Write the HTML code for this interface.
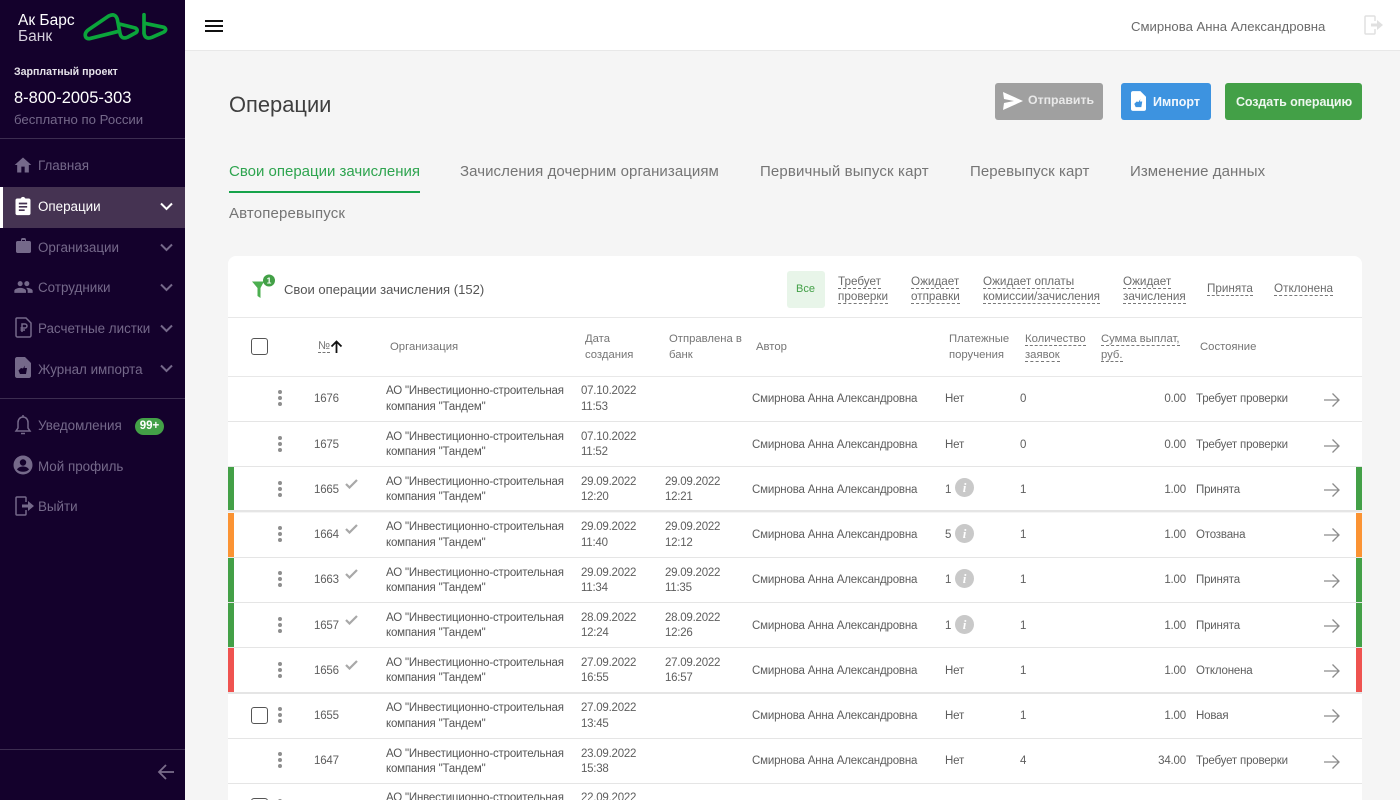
<!DOCTYPE html>
<html lang="ru"><head><meta charset="utf-8"><title>Операции</title>
<style>
*{box-sizing:border-box}
html,body{margin:0;padding:0;width:1400px;height:800px;overflow:hidden;background:#f5f5f5;font-family:"Liberation Sans",sans-serif;color:#555}
#w{position:absolute;left:0;top:0;width:1400px;height:800px;overflow:hidden;background:#f5f5f5}
.a,.t{position:absolute}
.t{white-space:nowrap;line-height:16px}
.nav{color:#75698a;font-size:13.400px;left:38px;line-height:20px;margin-top:1px}
.hd{font-size:11.300px;color:#757575}
.fl{font-size:11.700px;color:#6b6b6b;line-height:15px;top:274px}
.d{border-bottom:1px dashed #777}
.tab{font-size:15px;color:#757575;line-height:20px;letter-spacing:.07px}
.r{position:absolute;left:228px;width:1134px;background:#fff;border-bottom:1px solid #e5e5e5}
.r .t{font-size:11.500px;color:#5e5e5e;letter-spacing:-.18px;margin-top:1px}
.r .o{left:158px;line-height:15px;top:7px;color:#555;letter-spacing:-.19px}
.r .m{line-height:15px;top:7px;letter-spacing:-.24px}
.r .g{line-height:16px;top:6px;margin-top:0}
.bar{position:absolute;top:0;bottom:0;width:6px}
.cb{position:absolute;width:17px;height:17px;border:1.500px solid #555;border-radius:3px;background:#fff}
.dots{position:absolute;left:50px;width:4px;height:16px}
.dots i{display:block;width:4px;height:4px;border-radius:50%;background:#8e8e8e;margin-bottom:2px}
.inf{position:absolute;left:727px;width:19px;height:19px;border-radius:50%;background:#c9c9c9;color:#fff;font:italic bold 13px/19px "Liberation Serif",serif;text-align:center}
svg{position:absolute;display:block}
</style></head><body><div id="w">

<!-- sidebar -->
<div class="a" style="left:0;top:0;width:185px;height:800px;background:#14012c"></div>
<div class="t" style="left:18px;top:12px;color:#fff;font-size:15.500px;line-height:18px">Ак Барс</div>
<div class="t" style="left:18px;top:28px;color:#d5d0dc;font-size:15.500px;line-height:18px">Банк</div>
<svg style="left:78px;top:8px" width="95" height="40" viewBox="0 0 285 120" fill="none" stroke="#0ba53b" stroke-width="11" stroke-linecap="round" stroke-linejoin="round"><path d="M122 70 L34 92 Q20 92 22 78 Q24 70 32 65 L92 24 Q112 14 118 34 L126 76 Q130 95 148 88 L174 74 Q182 66 172 60 L124 48"/><path d="M198 20 L198 76 Q202 96 222 88 L258 72 Q268 64 258 58 L200 46"/></svg>
<div class="t" style="left:14px;top:64px;font-size:10.600px;font-weight:bold;color:#e6e3ea">Зарплатный проект</div>
<div class="t" style="left:14px;top:88px;font-size:16.500px;color:#fff;line-height:20px">8-800-2005-303</div>
<div class="t" style="left:14px;top:112px;font-size:13.200px;color:#75698a">бесплатно по России</div>
<div class="a" style="left:0;top:138px;width:185px;height:1px;background:#3c2d50"></div>
<div class="a" style="left:0;top:187px;width:185px;height:41px;background:#453352"></div>
<div class="a" style="left:0;top:187px;width:3px;height:41px;background:#fff"></div>

<svg style="left:13px;top:155px" width="20" height="20" viewBox="0 0 24 24" fill="#75698a"><path d="M10 21v-7h4v7h5v-9h3L12 3 2 12h3v9z"/></svg>
<div class="t nav" style="top:155px">Главная</div>
<svg style="left:13px;top:195px" width="20" height="22" viewBox="0 0 24 24" fill="#fff"><path d="M19 3h-4.200C14.400 1.800 13.300 1 12 1s-2.400.8-2.800 2H5C3.900 3 3 3.900 3 5v16c0 1.100.9 2 2 2h14c1.100 0 2-.9 2-2V5c0-1.100-.9-2-2-2zM7 8h10v2H7zm0 4h10v2H7zm0 4h7v2H7z"/></svg>
<div class="t nav" style="top:196px;color:#fff">Операции</div>
<svg style="left:16px;top:237px" width="15" height="18" viewBox="0 0 15 18" fill="#75698a"><path d="M5 4V2.500C5 1.700 5.700 1 6.500 1h2C9.300 1 10 1.700 10 2.500V4h3.500C14.300 4 15 4.700 15 5.500v9c0 .8-.7 1.500-1.500 1.500h-12C.7 16 0 15.300 0 14.500v-9C0 4.700.7 4 1.500 4zm1-1v1h3V3z"/></svg>
<div class="t nav" style="top:237px">Организации</div>
<svg style="left:13px;top:277px" width="21" height="20" viewBox="0 0 24 24" fill="#75698a"><path d="M16 11c1.700 0 3-1.300 3-3s-1.300-3-3-3-3 1.300-3 3 1.300 3 3 3zm-8 0c1.700 0 3-1.300 3-3S9.700 5 8 5 5 6.300 5 8s1.300 3 3 3zm0 2c-2.300 0-7 1.200-7 3.500V19h14v-2.500C15 14.200 10.300 13 8 13zm8 0h-1c1.200.9 2 2 2 3.500V19h6v-2.500c0-2.300-4.700-3.500-7-3.500z"/></svg>
<div class="t nav" style="top:277px">Сотрудники</div>
<svg style="left:15px;top:317px" width="17" height="21" viewBox="0 0 17 21" fill="none" stroke="#75698a" stroke-width="1.500"><path d="M2 1h9l5 5v12.500c0 .8-.7 1.500-1.500 1.500h-12C1.700 20 1 19.300 1 18.500V2C1 1.400 1.400 1 2 1zM7 15V7h3a2 2 0 0 1 0 4H5.500M5.500 13H10"/></svg>
<div class="t nav" style="top:318px">Расчетные листки</div>
<svg style="left:15px;top:357px" width="16" height="21" viewBox="0 0 16 21"><path fill="#75698a" d="M2 0h8l6 6v13c0 1.100-.9 2-2 2H2c-1.100 0-2-.9-2-2V2C0 .9.900 0 2 0z"/><path fill="#14012c" d="M10 8.500L9.500 11H12l-1 6H5l-1.500-3.500L6 11l2 .5z"/></svg>
<div class="t nav" style="top:359px">Журнал импорта</div>
<div class="a" style="left:0;top:398px;width:185px;height:1px;background:#3c2d50"></div>
<svg style="left:14px;top:414px" width="18" height="22" viewBox="0 0 18 22" fill="none" stroke="#75698a" stroke-width="1.500"><path d="M2 17h14l-2-3V8.500C14 5.500 12 3 9 3S4 5.500 4 8.500V14z"/><path d="M9 1v2M7 19.500h4"/></svg>
<div class="t nav" style="top:415px">Уведомления</div>
<div class="a" style="left:135px;top:418px;width:29px;height:17px;border-radius:9px;background:#43a047;color:#fff;font-size:11.500px;font-weight:bold;line-height:17px;text-align:center">99+</div>
<svg style="left:13px;top:455px" width="20" height="20" viewBox="0 0 20 20"><circle cx="10" cy="10" r="9.500" fill="#75698a"/><circle cx="10" cy="7.500" r="3.200" fill="#14012c"/><path fill="#14012c" d="M4 14.500c1-2 3.500-3 6-3s5 1 6 3c-1.500 1.500-3.500 2.300-6 2.300s-4.500-.8-6-2.300z"/></svg>
<div class="t nav" style="top:456px">Мой профиль</div>
<svg style="left:15px;top:496px" width="20" height="20" viewBox="0 0 20 20" fill="none" stroke="#75698a" stroke-width="1.500"><path d="M11 6V2c0-.6-.4-1-1-1H2c-.6 0-1 .4-1 1v16c0 .6.400 1 1 1h8c.6 0 1-.4 1-1v-4"/><path fill="#75698a" stroke="none" d="M7 8.500h6V5l6 5-6 5v-3.500H7z"/></svg>
<div class="t nav" style="top:496px">Выйти</div>
<svg style="left:160px;top:202px" width="13" height="9" viewBox="0 0 13 9" fill="none" stroke="#fff" stroke-width="2"><path d="M1 1.500l5.500 5.500L12 1.500"/></svg>
<svg style="left:160px;top:243px" width="13" height="9" viewBox="0 0 13 9" fill="none" stroke="#75698a" stroke-width="2"><path d="M1 1.500l5.500 5.500L12 1.500"/></svg>
<svg style="left:160px;top:283px" width="13" height="9" viewBox="0 0 13 9" fill="none" stroke="#75698a" stroke-width="2"><path d="M1 1.500l5.500 5.500L12 1.500"/></svg>
<svg style="left:160px;top:324px" width="13" height="9" viewBox="0 0 13 9" fill="none" stroke="#75698a" stroke-width="2"><path d="M1 1.500l5.500 5.500L12 1.500"/></svg>
<svg style="left:160px;top:364px" width="13" height="9" viewBox="0 0 13 9" fill="none" stroke="#75698a" stroke-width="2"><path d="M1 1.500l5.500 5.500L12 1.500"/></svg>
<div class="a" style="left:0;top:749px;width:185px;height:1px;background:#3c2d50"></div>
<svg style="left:157px;top:764px" width="18" height="16" viewBox="0 0 18 16" fill="none" stroke="#7a6d8b" stroke-width="1.800"><path d="M17 8H2M9 1L2 8l7 7"/></svg>

<!-- top bar -->
<div class="a" style="left:185px;top:0;width:1215px;height:51px;background:#fff;border-bottom:1px solid #e8e8e8"></div>
<div class="a" style="left:205px;top:20px;width:18px;height:2px;background:#111"></div>
<div class="a" style="left:205px;top:25px;width:18px;height:2px;background:#111"></div>
<div class="a" style="left:205px;top:30px;width:18px;height:2px;background:#111"></div>
<div class="t" style="left:1131px;top:19px;font-size:13.150px;color:#6b6b6b">Смирнова Анна Александровна</div>
<svg style="left:1364px;top:15px" width="20" height="20" viewBox="0 0 20 20" fill="none" stroke="#e0e0e0" stroke-width="1.500"><path d="M11 6V2c0-.6-.4-1-1-1H2c-.6 0-1 .4-1 1v16c0 .6.400 1 1 1h8c.6 0 1-.4 1-1v-4"/><path fill="#e0e0e0" stroke="none" d="M7 8.500h6V5l6 5-6 5v-3.500H7z"/></svg>

<!-- title + buttons -->
<div class="t" style="left:229px;top:92px;font-size:21.900px;color:#3f3f3f;line-height:26px">Операции</div>
<div class="a" style="left:995px;top:83px;width:108px;height:37px;background:#a0a0a0;border-radius:3px"></div>
<svg style="left:1003px;top:92px" width="20" height="18" viewBox="0 0 20 18" fill="#fff"><path d="M0 0l20 9L0 18l1-7 10-2-10-2z"/></svg>
<div class="t" style="left:1028px;top:92px;font-size:12.300px;font-weight:bold;color:#e9e9e9">Отправить</div>
<div class="a" style="left:1121px;top:83px;width:90px;height:37px;background:#3d93e0;border-radius:3px"></div>
<svg style="left:1131px;top:91px" width="15" height="20" viewBox="0 0 16 21"><path fill="#fff" d="M2 0h8l6 6v13c0 1.100-.9 2-2 2H2c-1.100 0-2-.9-2-2V2C0 .9.900 0 2 0z"/><path fill="#3d93e0" d="M10 8.500L9.500 11H12l-1 6H5l-1.500-3.500L6 11l2 .5z"/></svg>
<div class="t" style="left:1153px;top:94px;font-size:12.500px;font-weight:bold;color:#f1f7fd">Импорт</div>
<div class="a" style="left:1225px;top:83px;width:137px;height:37px;background:#43a047;border-radius:3px"></div>
<div class="t" style="left:1236px;top:94px;font-size:12.500px;font-weight:bold;color:#eef7ef;letter-spacing:-.1px">Создать операцию</div>

<!-- tabs -->
<div class="t tab" style="left:229px;top:162px;color:#2ea44f;letter-spacing:0">Свои операции зачисления</div>
<div class="a" style="left:229px;top:191px;width:191px;height:2px;background:#16a34a"></div>
<div class="t tab" style="left:460px;top:162px">Зачисления дочерним организациям</div>
<div class="t tab" style="left:760px;top:162px;letter-spacing:.14px">Первичный выпуск карт</div>
<div class="t tab" style="left:970px;top:162px">Перевыпуск карт</div>
<div class="t tab" style="left:1130px;top:162px">Изменение данных</div>
<div class="t tab" style="left:229px;top:204px;letter-spacing:.14px">Автоперевыпуск</div>

<!-- card head -->
<div class="a" style="left:228px;top:256px;width:1134px;height:62px;background:#fff;border-radius:8px 8px 0 0;border-bottom:1px solid #e8e8e8"></div>
<svg style="left:252px;top:274px" width="24" height="26" viewBox="0 0 24 26"><path fill="#4caf50" d="M0 7.500h12L8.500 14v10l-3-2v-8z"/><circle cx="17" cy="6.500" r="6" fill="#43a047"/><text x="17" y="9.500" font-size="8.500" font-weight="bold" fill="#fff" text-anchor="middle" font-family="Liberation Sans">1</text></svg>
<div class="t" style="left:284px;top:282px;font-size:13.050px;color:#555">Свои операции зачисления (152)</div>
<div class="a" style="left:787px;top:271px;width:38px;height:37px;background:#e8f5e9;border-radius:3px"></div>
<div class="t" style="left:796px;top:281px;font-size:11px;color:#43a047">Все</div>
<div class="t fl" style="left:838px"><span class="d">Требует</span><br><span class="d">проверки</span></div>
<div class="t fl" style="left:911px"><span class="d">Ожидает</span><br><span class="d">отправки</span></div>
<div class="t fl" style="left:983px"><span class="d">Ожидает оплаты</span><br><span class="d">комиссии/зачисления</span></div>
<div class="t fl" style="left:1123px"><span class="d">Ожидает</span><br><span class="d">зачисления</span></div>
<div class="t fl" style="left:1207px;top:281px"><span class="d">Принята</span></div>
<div class="t fl" style="left:1274px;top:281px"><span class="d">Отклонена</span></div>

<!-- table head -->
<div class="a" style="left:228px;top:318px;width:1134px;height:59px;background:#fff;border-bottom:1px solid #e8e8e8"></div>
<div class="cb" style="left:251px;top:338px"></div>
<div class="t hd" style="left:318px;top:338px"><span class="d">№</span></div>
<svg style="left:330px;top:340px" width="13" height="13" viewBox="0 0 13 13" fill="none" stroke="#111" stroke-width="1.800"><path d="M6.500 13V2M1.500 6.500l5-5 5 5"/></svg>
<div class="t hd" style="left:390px;top:339px">Организация</div>
<div class="t hd" style="left:585px;top:331px">Дата<br>создания</div>
<div class="t hd" style="left:669px;top:331px">Отправлена в<br>банк</div>
<div class="t hd" style="left:756px;top:339px">Автор</div>
<div class="t hd" style="left:949px;top:331px">Платежные<br>поручения</div>
<div class="t hd" style="left:1025px;top:331px"><span class="d">Количество</span><br><span class="d">заявок</span></div>
<div class="t hd" style="left:1101px;top:331px"><span class="d">Сумма выплат,</span><br><span class="d">руб.</span></div>
<div class="t hd" style="left:1200px;top:339px">Состояние</div>

<!-- rows -->
<div class="r" style="top:377px;height:45px"><div class="dots" style="top:13px"><i></i><i></i><i></i></div><div class="t" style="left:86px;top:13px">1676</div><div class="t o g">АО "Инвестиционно-строительная<br>компания "Тандем"</div><div class="t m g" style="left:353px">07.10.2022<br>11:53</div><div class="t" style="left:524px;top:13px">Смирнова Анна Александровна</div><div class="t" style="left:717px;top:13px">Нет</div><div class="t" style="left:792px;top:13px">0</div><div class="t" style="right:176px;top:13px">0.00</div><div class="t" style="left:968px;top:13px">Требует проверки</div><svg style="left:1096px;top:15px" width="16" height="16" viewBox="0 0 16 16" fill="none" stroke="#8c8c8c" stroke-width="1.300"><path d="M0 8h15M8.500 1.500L15 8l-6.500 6.500"/></svg></div>

<div class="r" style="top:422px;height:45px"><div class="dots" style="top:14px"><i></i><i></i><i></i></div><div class="t" style="left:86px;top:14px">1675</div><div class="t o">АО "Инвестиционно-строительная<br>компания "Тандем"</div><div class="t m" style="left:353px">07.10.2022<br>11:52</div><div class="t" style="left:524px;top:14px">Смирнова Анна Александровна</div><div class="t" style="left:717px;top:14px">Нет</div><div class="t" style="left:792px;top:14px">0</div><div class="t" style="right:176px;top:14px">0.00</div><div class="t" style="left:968px;top:14px">Требует проверки</div><svg style="left:1096px;top:15.500px" width="16" height="16" viewBox="0 0 16 16" fill="none" stroke="#8c8c8c" stroke-width="1.300"><path d="M0 8h15M8.500 1.500L15 8l-6.500 6.500"/></svg></div>

<div class="r" style="top:467px;height:45px;border-bottom-width:2px"><div class="bar" style="left:0;background:#43a047"></div><div class="bar" style="right:0;background:#43a047"></div><div class="dots" style="top:14px"><i></i><i></i><i></i></div><div class="t" style="left:86px;top:14px">1665</div><svg style="left:117px;top:12px" width="13" height="10" viewBox="0 0 13 10" fill="none" stroke="#a8a8a8" stroke-width="2.200"><path d="M1 5l3.500 3.500L12 1"/></svg><div class="t o">АО "Инвестиционно-строительная<br>компания "Тандем"</div><div class="t m" style="left:353px">29.09.2022<br>12:20</div><div class="t m" style="left:437px">29.09.2022<br>12:21</div><div class="t" style="left:524px;top:14px">Смирнова Анна Александровна</div><div class="t" style="left:717px;top:14px">1</div><div class="inf" style="top:11px">i</div><div class="t" style="left:792px;top:14px">1</div><div class="t" style="right:176px;top:14px">1.00</div><div class="t" style="left:968px;top:14px">Принята</div><svg style="left:1096px;top:15px" width="16" height="16" viewBox="0 0 16 16" fill="none" stroke="#8c8c8c" stroke-width="1.300"><path d="M0 8h15M8.500 1.500L15 8l-6.500 6.500"/></svg></div>

<div class="r" style="top:513px;height:45px"><div class="bar" style="left:0;background:#fb9333"></div><div class="bar" style="right:0;background:#fb9333"></div><div class="dots" style="top:13px"><i></i><i></i><i></i></div><div class="t" style="left:86px;top:13px">1664</div><svg style="left:117px;top:11px" width="13" height="10" viewBox="0 0 13 10" fill="none" stroke="#a8a8a8" stroke-width="2.200"><path d="M1 5l3.500 3.500L12 1"/></svg><div class="t o g">АО "Инвестиционно-строительная<br>компания "Тандем"</div><div class="t m g" style="left:353px">29.09.2022<br>11:40</div><div class="t m g" style="left:437px">29.09.2022<br>12:12</div><div class="t" style="left:524px;top:13px">Смирнова Анна Александровна</div><div class="t" style="left:717px;top:13px">5</div><div class="inf" style="top:11px">i</div><div class="t" style="left:792px;top:13px">1</div><div class="t" style="right:176px;top:13px">1.00</div><div class="t" style="left:968px;top:13px">Отозвана</div><svg style="left:1096px;top:14px" width="16" height="16" viewBox="0 0 16 16" fill="none" stroke="#8c8c8c" stroke-width="1.300"><path d="M0 8h15M8.500 1.500L15 8l-6.500 6.500"/></svg></div>

<div class="r" style="top:558px;height:45px"><div class="bar" style="left:0;background:#43a047"></div><div class="bar" style="right:0;background:#43a047"></div><div class="dots" style="top:13px"><i></i><i></i><i></i></div><div class="t" style="left:86px;top:13px">1663</div><svg style="left:117px;top:11px" width="13" height="10" viewBox="0 0 13 10" fill="none" stroke="#a8a8a8" stroke-width="2.200"><path d="M1 5l3.500 3.500L12 1"/></svg><div class="t o">АО "Инвестиционно-строительная<br>компания "Тандем"</div><div class="t m" style="left:353px">29.09.2022<br>11:34</div><div class="t m" style="left:437px">29.09.2022<br>11:35</div><div class="t" style="left:524px;top:13px">Смирнова Анна Александровна</div><div class="t" style="left:717px;top:13px">1</div><div class="inf" style="top:11px">i</div><div class="t" style="left:792px;top:13px">1</div><div class="t" style="right:176px;top:13px">1.00</div><div class="t" style="left:968px;top:13px">Принята</div><svg style="left:1096px;top:15px" width="16" height="16" viewBox="0 0 16 16" fill="none" stroke="#8c8c8c" stroke-width="1.300"><path d="M0 8h15M8.500 1.500L15 8l-6.500 6.500"/></svg></div>

<div class="r" style="top:603px;height:45px"><div class="bar" style="left:0;background:#43a047"></div><div class="bar" style="right:0;background:#43a047"></div><div class="dots" style="top:14px"><i></i><i></i><i></i></div><div class="t" style="left:86px;top:14px">1657</div><svg style="left:117px;top:12px" width="13" height="10" viewBox="0 0 13 10" fill="none" stroke="#a8a8a8" stroke-width="2.200"><path d="M1 5l3.500 3.500L12 1"/></svg><div class="t o">АО "Инвестиционно-строительная<br>компания "Тандем"</div><div class="t m" style="left:353px">28.09.2022<br>12:24</div><div class="t m" style="left:437px">28.09.2022<br>12:26</div><div class="t" style="left:524px;top:14px">Смирнова Анна Александровна</div><div class="t" style="left:717px;top:14px">1</div><div class="inf" style="top:12px">i</div><div class="t" style="left:792px;top:14px">1</div><div class="t" style="right:176px;top:14px">1.00</div><div class="t" style="left:968px;top:14px">Принята</div><svg style="left:1096px;top:15px" width="16" height="16" viewBox="0 0 16 16" fill="none" stroke="#8c8c8c" stroke-width="1.300"><path d="M0 8h15M8.500 1.500L15 8l-6.500 6.500"/></svg></div>

<div class="r" style="top:648px;height:46px;border-bottom-width:2px"><div class="bar" style="left:0;background:#ef5350"></div><div class="bar" style="right:0;background:#ef5350"></div><div class="dots" style="top:14px"><i></i><i></i><i></i></div><div class="t" style="left:86px;top:14px">1656</div><svg style="left:117px;top:12px" width="13" height="10" viewBox="0 0 13 10" fill="none" stroke="#a8a8a8" stroke-width="2.200"><path d="M1 5l3.500 3.500L12 1"/></svg><div class="t o">АО "Инвестиционно-строительная<br>компания "Тандем"</div><div class="t m" style="left:353px">27.09.2022<br>16:55</div><div class="t m" style="left:437px">27.09.2022<br>16:57</div><div class="t" style="left:524px;top:14px">Смирнова Анна Александровна</div><div class="t" style="left:717px;top:14px">Нет</div><div class="t" style="left:792px;top:14px">1</div><div class="t" style="right:176px;top:14px">1.00</div><div class="t" style="left:968px;top:14px">Отклонена</div><svg style="left:1096px;top:15px" width="16" height="16" viewBox="0 0 16 16" fill="none" stroke="#8c8c8c" stroke-width="1.300"><path d="M0 8h15M8.500 1.500L15 8l-6.500 6.500"/></svg></div>

<div class="r" style="top:694px;height:45px"><div class="cb" style="left:23px;top:13px"></div><div class="dots" style="top:13px"><i></i><i></i><i></i></div><div class="t" style="left:86px;top:13px">1655</div><div class="t o g">АО "Инвестиционно-строительная<br>компания "Тандем"</div><div class="t m g" style="left:353px">27.09.2022<br>13:45</div><div class="t" style="left:524px;top:13px">Смирнова Анна Александровна</div><div class="t" style="left:717px;top:13px">Нет</div><div class="t" style="left:792px;top:13px">1</div><div class="t" style="right:176px;top:13px">1.00</div><div class="t" style="left:968px;top:13px">Новая</div><svg style="left:1096px;top:14px" width="16" height="16" viewBox="0 0 16 16" fill="none" stroke="#8c8c8c" stroke-width="1.300"><path d="M0 8h15M8.500 1.500L15 8l-6.500 6.500"/></svg></div>

<div class="r" style="top:739px;height:45px"><div class="dots" style="top:13px"><i></i><i></i><i></i></div><div class="t" style="left:86px;top:13px">1647</div><div class="t o">АО "Инвестиционно-строительная<br>компания "Тандем"</div><div class="t m" style="left:353px">23.09.2022<br>15:38</div><div class="t" style="left:524px;top:13px">Смирнова Анна Александровна</div><div class="t" style="left:717px;top:13px">Нет</div><div class="t" style="left:792px;top:13px">4</div><div class="t" style="right:176px;top:13px">34.00</div><div class="t" style="left:968px;top:13px">Требует проверки</div><svg style="left:1096px;top:15px" width="16" height="16" viewBox="0 0 16 16" fill="none" stroke="#8c8c8c" stroke-width="1.300"><path d="M0 8h15M8.500 1.500L15 8l-6.500 6.500"/></svg></div>

<div class="r" style="top:784px;height:16px;border:0;overflow:hidden"><div class="cb" style="left:23px;top:14px"></div><div class="dots" style="top:15px"><i></i><i></i><i></i></div><div class="t o g">АО "Инвестиционно-строительная<br>компания "Тандем"</div><div class="t m g" style="left:353px">22.09.2022<br>15:00</div></div>

</div></body></html>
